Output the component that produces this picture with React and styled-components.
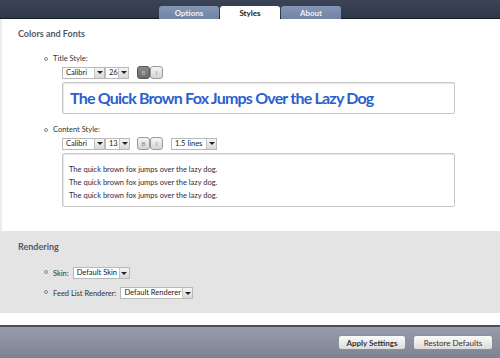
import React from "react";
import styled, { createGlobalStyle } from "styled-components";

const Global = createGlobalStyle`
  html, body { margin: 0; padding: 0; background: #fff; }
  body { font-family: Lato, "Noto Sans", sans-serif; }
`;

const Page = styled.div`
  width: 500px;
  height: 358px;
  display: flex;
  flex-direction: column;
  overflow: hidden;
`;

const TopBar = styled.div`
  height: 18px;
  flex-shrink: 0;
  background: linear-gradient(#3a4456, #2f3848);
  border-bottom: 1px solid #161b24;
  display: flex;
  justify-content: center;
  align-items: flex-end;
  padding-left: 1px;
`;

const Tab = styled.div`
  width: 60px;
  height: 13px;
  margin-right: 1px;
  border-radius: 3px 3px 0 0;
  display: flex;
  align-items: center;
  justify-content: center;
  font-size: 8px;
  font-weight: 700;
  color: ${(p) => (p.$active ? "#222" : "#eef1f6")};
  background: ${(p) =>
    p.$active ? "#fff" : "linear-gradient(#8496b5, #7183a3)"};
  position: relative;
  top: 1px;
`;

const Main = styled.div`
  height: 212px;
  flex-shrink: 0;
  box-sizing: border-box;
  background: #fff;
  border-left: 2px solid #ececec;
  padding: 9px 0 0 16px;
`;

const SectionTitle = styled.div`
  font-size: 9px;
  font-weight: 700;
  color: #555b63;
`;

const List = styled.ul`
  margin: ${(p) => p.$top || 0}px 0 0 0;
  padding: 0 0 0 35px;
  list-style: none;
`;

const Item = styled.li`
  position: relative;
  font-size: 7.5px;
  color: #333;
  margin-bottom: ${(p) => p.$gap || 0}px;
  &::before {
    content: "";
    position: absolute;
    left: -9px;
    top: 3px;
    width: 2px;
    height: 2px;
    border: 1px solid #888;
    border-radius: 50%;
  }
`;

const Label = styled.div`
  line-height: 10px;
`;

const Controls = styled.div`
  display: flex;
  align-items: center;
  margin: ${(p) => p.$top || 2}px 0 0 9px;
`;

const Select = styled.div`
  display: flex;
  align-items: stretch;
  height: 12px;
  width: ${(p) => p.$w}px;
  border: 1px solid #b9b9b9;
  background: #fff;
  font-size: 7.5px;
  color: #222;
  box-sizing: border-box;
  margin-right: ${(p) => p.$mr || 0}px;
`;

const SelectText = styled.span`
  flex: 1;
  padding-left: 3px;
  line-height: 10px;
  white-space: nowrap;
  overflow: hidden;
`;

const Arrow = styled.span`
  width: 9px;
  flex-shrink: 0;
  background: linear-gradient(#f4f4f4, #d8d8d8);
  border-left: 1px solid #c4c4c4;
  display: flex;
  align-items: center;
  justify-content: center;
  &::after {
    content: "";
    border-left: 3px solid transparent;
    border-right: 3px solid transparent;
    border-top: 3px solid #222;
  }
`;

const Toggle = styled.div`
  width: 13px;
  height: 13px;
  box-sizing: border-box;
  border: 1px solid ${(p) => (p.$on ? "#555" : "#9a9a9a")};
  border-radius: 3px;
  background: ${(p) =>
    p.$on ? "linear-gradient(#8a8a8a, #6c6c6c)" : "linear-gradient(#f6f6f6, #d4d4d4)"};
  color: ${(p) => (p.$on ? "#bbb" : "#888")};
  font-size: 6px;
  display: flex;
  align-items: center;
  justify-content: center;
  margin-right: ${(p) => p.$mr || 0}px;
`;

const Preview = styled.div`
  margin: 3px 0 0 9px;
  width: 393px;
  height: ${(p) => p.$h}px;
  box-sizing: border-box;
  border: 1px solid #c8c8c8;
  border-radius: 2px;
  box-shadow: inset 1px 1px 1px #e6e6e6;
  padding: ${(p) => p.$pad};
`;

const BigText = styled.div`
  font-family: Lato, "Noto Sans", sans-serif;
  font-size: 16px;
  font-weight: 700;
  color: #2b5fcf;
  letter-spacing: -0.8px;
  line-height: 20px;
  white-space: nowrap;
`;

const SmallLine = styled.div`
  font-size: 7.5px;
  color: #2e2a3a;
  line-height: 13px;
`;

const Rendering = styled.div`
  height: 82px;
  flex-shrink: 0;
  background: #e4e4e4;
  padding: 10px 0 0 18px;
  box-sizing: border-box;
`;

const Row = styled.div`
  display: flex;
  align-items: center;
  gap: 4px;
`;

const Spacer = styled.div`
  height: 12px;
  flex-shrink: 0;
  background: #fff;
  border-bottom: 2px solid #4a4e56;
`;

const Footer = styled.div`
  flex: 1;
  background: linear-gradient(#979daa, #7d8390);
  display: flex;
  justify-content: flex-end;
  align-items: center;
  gap: 7px;
  padding-right: 7px;
`;

const Button = styled.button`
  width: ${(p) => p.$w}px;
  height: 15px;
  padding: 0;
  border: 1px solid #8b8f97;
  border-radius: 3px;
  background: linear-gradient(#fbfbfb, #dcdcdc);
  font-family: Lato, "Noto Sans", sans-serif;
  font-size: 8px;
  font-weight: ${(p) => (p.$bold ? 700 : 400)};
  color: #333;
`;

function Dropdown({ w, mr, children }) {
  return (
    <Select $w={w} $mr={mr}>
      <SelectText>{children}</SelectText>
      <Arrow />
    </Select>
  );
}

const line = "The quick brown fox jumps over the lazy dog.";

export default function App() {
  return (
    <Page>
      <Global />
      <TopBar>
        <Tab>Options</Tab>
        <Tab $active>Styles</Tab>
        <Tab>About</Tab>
      </TopBar>
      <Main>
        <SectionTitle>Colors and Fonts</SectionTitle>
        <List $top={15}>
          <Item $gap={11}>
            <Label>Title Style:</Label>
            <Controls>
              <Dropdown w={43}>Calibri</Dropdown>
              <Dropdown w={24} mr={8}>26</Dropdown>
              <Toggle $on>B</Toggle>
              <Toggle>I</Toggle>
            </Controls>
            <Preview $h={32} $pad="5px 0 0 7px">
              <BigText>The Quick Brown Fox Jumps Over the Lazy Dog</BigText>
            </Preview>
          </Item>
          <Item>
            <Label>Content Style:</Label>
            <Controls>
              <Dropdown w={43}>Calibri</Dropdown>
              <Dropdown w={25} mr={7}>13</Dropdown>
              <Toggle>B</Toggle>
              <Toggle $mr={8}>I</Toggle>
              <Dropdown w={46}>1.5 lines</Dropdown>
            </Controls>
            <Preview $h={54} $pad="9px 0 0 6px">
              <SmallLine>{line}</SmallLine>
              <SmallLine>{line}</SmallLine>
              <SmallLine>{line}</SmallLine>
            </Preview>
          </Item>
        </List>
      </Main>
      <Rendering>
        <SectionTitle>Rendering</SectionTitle>
        <List $top={15}>
          <Item $gap={8}>
            <Row>
              <span>Skin:</span>
              <Dropdown w={57}>Default Skin</Dropdown>
            </Row>
          </Item>
          <Item>
            <Row>
              <span>Feed List Renderer:</span>
              <Dropdown w={73}>Default Renderer</Dropdown>
            </Row>
          </Item>
        </List>
      </Rendering>
      <Spacer />
      <Footer>
        <Button $w={68} $bold>Apply Settings</Button>
        <Button $w={80}>Restore Defaults</Button>
      </Footer>
    </Page>
  );
}
